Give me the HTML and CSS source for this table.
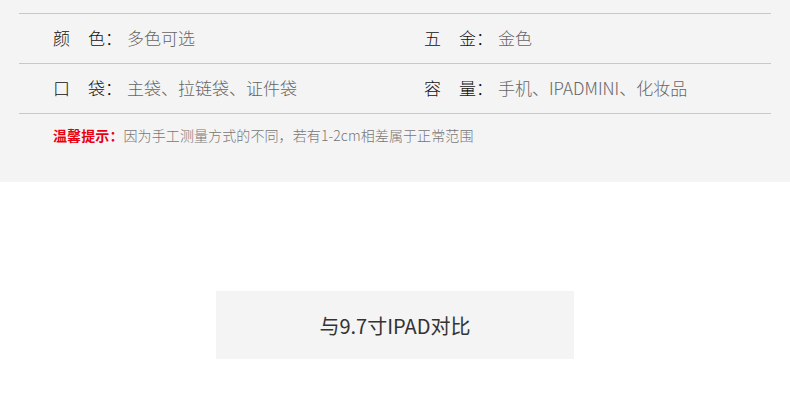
FILE: index.html
```html
<!DOCTYPE html>
<html lang="zh-CN">
<head>
    <meta charset="UTF-8">
    <meta name="viewport" content="width=device-width, initial-scale=1.0">
    <title>产品参数</title>
    <link rel="stylesheet" href="styles.css">
</head>
<body>

    <div class="params">
        <div class="table">
            <div class="row">
                <div class="cell">
                    <span class="label"><span class="first">颜</span>色：</span>
                    <span class="value">多色可选</span>
                </div>
                <div class="cell">
                    <span class="label"><span class="first">五</span>金：</span>
                    <span class="value">金色</span>
                </div>
            </div>
            <div class="row">
                <div class="cell">
                    <span class="label"><span class="first">口</span>袋：</span>
                    <span class="value">主袋、拉链袋、证件袋</span>
                </div>
                <div class="cell">
                    <span class="label"><span class="first">容</span>量：</span>
                    <span class="value">手机、IPADMINI、化妆品</span>
                </div>
            </div>
        </div>
        <p class="tip"><b>温馨提示：</b>因为手工测量方式的不同，若有1-2cm相差属于正常范围</p>
    </div>

    <div class="compare">
        <div class="compare-title">与9.7寸IPAD对比</div>
    </div>

</body>
</html>
```

FILE: styles.css
```css
body {
    margin: 0;
    background: #fff;
    color: #333;
    font-family: "Noto Sans CJK SC", "Noto Sans", sans-serif;
}

.params {
    background: #f4f4f4;
    height: 182px;
    padding-top: 13px;
    box-sizing: border-box;
}

.table {
    margin: 0 19px;
    border-top: 1px solid #c8c8c8;
}

.row {
    display: grid;
    grid-template-columns: 371px 1fr;
    align-items: center;
    height: 49px;
    padding-left: 34px;
    border-bottom: 1px solid #c8c8c8;
    font-size: 17px;
}

.cell {
    display: flex;
    align-items: center;
    margin-top: -3px;
}

.label {
    display: inline-flex;
    width: 74px;
    color: #111;
    font-weight: 300;
}

.label .first {
    margin-right: 18px;
}

.value {
    color: #666;
    font-weight: 300;
}

.tip {
    margin: 11px 0 0 53px;
    font-size: 14px;
    font-weight: 300;
    letter-spacing: 0.1px;
    color: #777;
}

.tip b {
    color: #e60012;
    font-weight: 700;
}

.compare {
    display: flex;
    justify-content: center;
    padding-top: 109px;
}

.compare-title {
    width: 358px;
    height: 68px;
    display: flex;
    align-items: center;
    justify-content: center;
    background: #f4f4f4;
    font-size: 20px;
    color: #333;
}
```
